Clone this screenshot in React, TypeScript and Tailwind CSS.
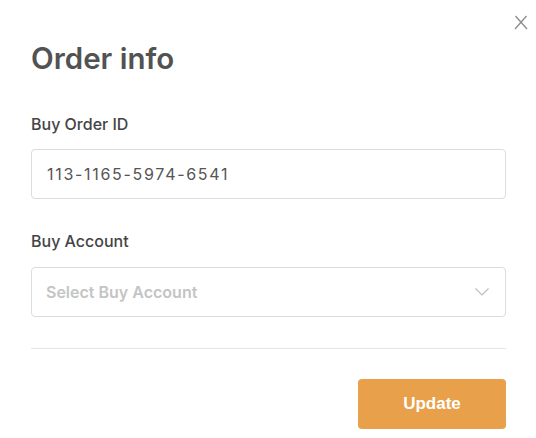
import React from "react";

export default function App() {
  return (
    <div className="relative w-[536px] h-[438px] bg-white font-['Inter',sans-serif]">
      <button className="absolute right-[8px] top-[15px] w-[14px] h-[15px] text-[#8f8f8f]">
        <svg viewBox="0 0 14 15" width="14" height="15" fill="none" stroke="currentColor" strokeWidth="1.4">
          <path d="M1.5 1 L13 14 M12.5 1 L1 14" />
        </svg>
      </button>
      <div className="pl-[31px] pr-[30px] pt-[41px]">
        <h1 className="text-[29.5px] leading-[35px] font-semibold text-[#525252]">Order info</h1>
        <div className="mt-[38px] text-[16px] leading-[20px] font-medium text-[#444]">Buy Order ID</div>
        <div className="mt-[15px] h-[50px] border border-[#dcdcdc] rounded-[4px] flex items-center pl-[15px] text-[16px] tracking-[1.7px] text-[#555]">
          113-1165-5974-6541
        </div>
        <div className="mt-[32px] text-[16px] leading-[20px] font-medium text-[#444]">Buy Account</div>
        <div className="mt-[16px] h-[50px] border border-[#dcdcdc] rounded-[4px] flex items-center justify-between pl-[14px] pr-[16px]">
          <span className="text-[16px] font-semibold text-[#c4c4c4]">Select Buy Account</span>
          <svg viewBox="0 0 14 8" width="14" height="8" fill="none" stroke="#bdbdbd" strokeWidth="1.2">
            <path d="M0.5 0.5 L7 7 L13.5 0.5" />
          </svg>
        </div>
        <div className="mt-[31px] h-px bg-[#e6e6e6]" />
        <div className="mt-[30px] flex justify-end">
          <button className="w-[148px] h-[50px] rounded-[4px] bg-[#e8a04b] text-white text-[17px] font-bold font-['Liberation_Sans',sans-serif]">
            Update
          </button>
        </div>
      </div>
    </div>
  );
}
